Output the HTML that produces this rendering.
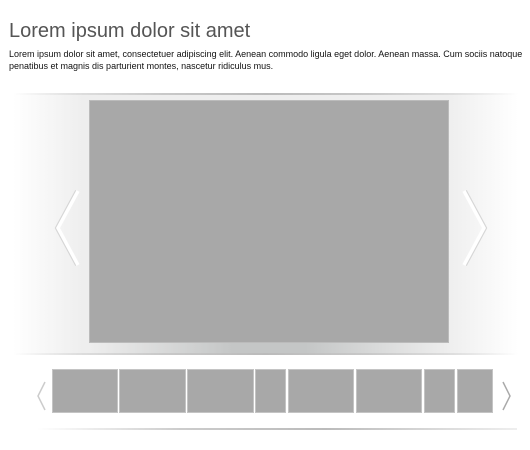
<!DOCTYPE html>
<html><head><style>
body{margin:0;width:530px;height:450px;background:#fff;position:relative;overflow:hidden;font-family:"Liberation Sans",Arial,sans-serif}
h1{position:absolute;left:9px;top:20px;margin:0;font-size:20px;font-weight:normal;color:#555}
p{position:absolute;left:9px;top:48px;margin:0;font-size:9px;line-height:12px;color:#111;width:520px}
.band{position:absolute;left:13px;top:93px;width:505px;height:262px;background:linear-gradient(90deg,#fff 0%,#eee 14%,#eee 86%,#fff 100%)}
.band:before,.band:after{content:"";position:absolute;left:0;right:0;height:2px;background:linear-gradient(90deg,rgba(190,190,190,0),#c8c8c8 30%,#bbb 50%,#c8c8c8 70%,rgba(190,190,190,0))}
.band:before{top:0}.band:after{bottom:0}
.shadow{position:absolute;left:89px;top:343px;width:360px;height:10px;background:linear-gradient(90deg,rgba(200,200,200,0),#c4c6c6 40%,#c4c6c6 60%,rgba(200,200,200,0))}
.main{position:absolute;left:89px;top:100px;width:360px;height:243px;background:#a8a8a8;border:1px solid #bbb;box-sizing:border-box}
.t{position:absolute;top:369px;height:44px;background:#a8a8a8;border:1px solid #c4c4c4;box-sizing:border-box}
.line2{position:absolute;left:37px;top:428px;width:480px;height:2px;background:linear-gradient(90deg,rgba(200,200,200,0),#ccc 30%,#bbb 60%,rgba(200,200,200,0.3))}
svg{position:absolute}
</style></head><body>
<h1>Lorem ipsum dolor sit amet</h1>
<p>Lorem ipsum dolor sit amet, consectetuer adipiscing elit. Aenean commodo ligula eget dolor. Aenean massa. Cum sociis natoque penatibus et magnis dis parturient montes, nascetur ridiculus mus.</p>
<div class="band"></div>
<div class="shadow"></div>
<div class="main"></div>
<svg style="left:48px;top:188px" width="34" height="82"><path d="M29 3 L9 40 L29 77" fill="none" stroke="#d6d6d6" stroke-width="4"/><path d="M30 3 L10 40 L30 77" fill="none" stroke="#fff" stroke-width="3.5"/></svg>
<svg style="left:459px;top:188px" width="34" height="82"><path d="M6 3 L26 40 L6 77" fill="none" stroke="#d6d6d6" stroke-width="4"/><path d="M5 3 L25 40 L5 77" fill="none" stroke="#fff" stroke-width="3.5"/></svg>
<div class="t" style="left:52px;width:66px"></div>
<div class="t" style="left:119px;width:67px"></div>
<div class="t" style="left:187px;width:67px"></div>
<div class="t" style="left:255px;width:31px"></div>
<div class="t" style="left:288px;width:66px"></div>
<div class="t" style="left:356px;width:66px"></div>
<div class="t" style="left:424px;width:31px"></div>
<div class="t" style="left:457px;width:36px"></div>
<svg style="left:36px;top:380px" width="12" height="32"><path d="M9 2 L2 16 L9 30" fill="none" stroke="#ccc" stroke-width="1.5"/></svg>
<svg style="left:500px;top:380px" width="12" height="32"><path d="M3 2 L10 16 L3 30" fill="none" stroke="#aaa" stroke-width="1.5"/></svg>
<div class="line2"></div>
</body></html>
